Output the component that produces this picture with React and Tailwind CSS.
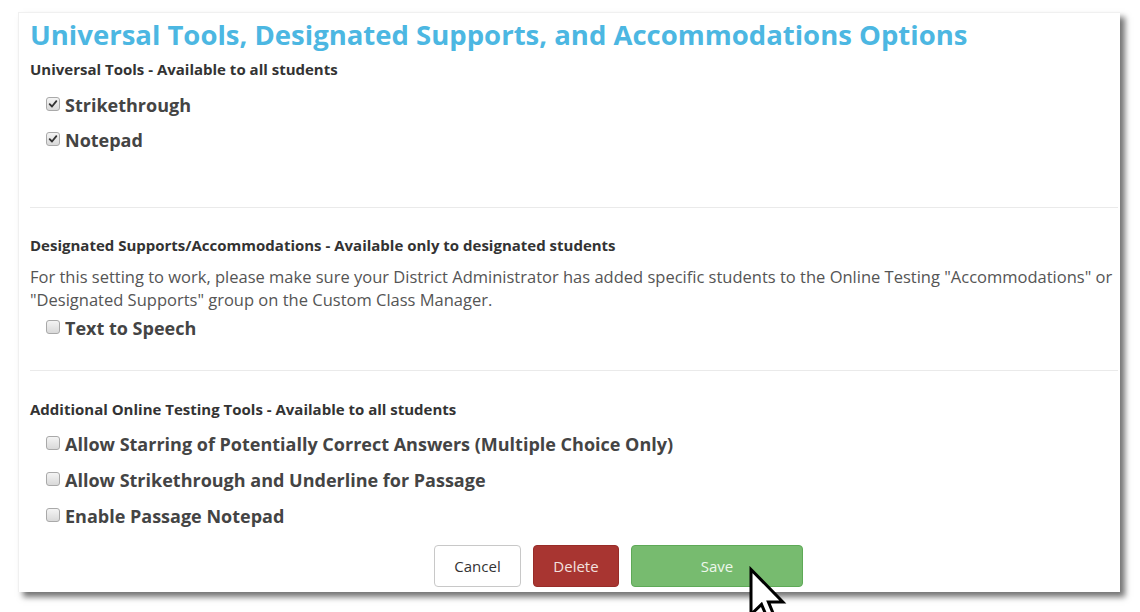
import React, { useState } from "react";

const font = { fontFamily: '"Open Sans", "Noto Sans", sans-serif' };

const Check = ({ checked, onChange }) => (
  <span
    onClick={onChange}
    className="mt-[9px] w-[14px] h-[14px] shrink-0 rounded-[3px] border border-[#a9a9a9] bg-gradient-to-b from-[#f4f4f4] to-[#d9d9d9] flex items-center justify-center cursor-pointer"
  >
    {checked && (
      <svg viewBox="0 0 12 12" className="w-[10px] h-[10px]">
        <path d="M2 6.2 L4.8 9 L10 2.6" fill="none" stroke="#333" strokeWidth="2.2" strokeLinecap="round" strokeLinejoin="round" />
      </svg>
    )}
  </span>
);

const Option = ({ label, checked, onChange, tall }) => (
  <div className={`flex items-start gap-[5px] pl-[16px] ${tall ? "h-[36px]" : "h-[35px]"}`}>
    <Check checked={checked} onChange={onChange} />
    <span className="text-[18px] leading-[35px] font-bold text-[#444]">{label}</span>
  </div>
);

const Heading = ({ children, className }) => (
  <h4 className={`text-[15px] leading-[20px] font-bold text-[#333] ${className}`}>{children}</h4>
);

const Cursor = () => (
  <svg className="absolute left-[748px] top-[566px] w-[42px] h-[64px]" viewBox="0 0 14 21">
    <path
      d="M1 1 L1 16 L4.5 12.6 L7 18.5 L9.2 17.6 L6.8 11.8 L11.6 11.8 Z"
      fill="#fff"
      stroke="#000"
      strokeWidth="1"
      strokeLinejoin="miter"
    />
  </svg>
);

export default function App() {
  const [opts, setOpts] = useState({
    strike: true,
    notepad: true,
    tts: false,
    star: false,
    passage: false,
    passNote: false,
  });
  const toggle = (k) => setOpts((o) => ({ ...o, [k]: !o[k] }));

  return (
    <div className="relative w-[1140px] h-[612px] bg-white overflow-hidden" style={font}>
      <div className="ml-[18px] mt-[12px] w-[1102px] bg-white border-l border-t border-[#f0f0f0] shadow-[5px_5px_6px_rgba(0,0,0,0.55)] pl-[11px] pr-[2px] pt-[4px] pb-[5px]">
        <h2 className="text-[27.5px] leading-[36px] font-bold text-[#4cb7e2]">
          Universal Tools, Designated Supports, and Accommodations Options
        </h2>

        <Heading className="mt-[6px]">Universal Tools - Available to all students</Heading>
        <div className="mt-[9px]">
          <Option label="Strikethrough" checked={opts.strike} onChange={() => toggle("strike")} />
          <Option label="Notepad" checked={opts.notepad} onChange={() => toggle("notepad")} />
        </div>

        <hr className="mt-[49px] border-0 border-t border-[#eaeaea]" />

        <Heading className="mt-[27px]">
          Designated Supports/Accommodations - Available only to designated students
        </Heading>
        <p className="mt-[10px] text-[16.5px] leading-[23px] text-[#555]">
          For this setting to work, please make sure your District Administrator has added specific students to the Online Testing "Accommodations" or "Designated Supports" group on the Custom Class Manager.
        </p>
        <Option label="Text to Speech" checked={opts.tts} onChange={() => toggle("tts")} />

        <hr className="mt-[24px] border-0 border-t border-[#eaeaea]" />

        <Heading className="mt-[28px]">Additional Online Testing Tools - Available to all students</Heading>
        <div className="mt-[8px]">
          <Option
            tall
            label="Allow Starring of Potentially Correct Answers (Multiple Choice Only)"
            checked={opts.star}
            onChange={() => toggle("star")}
          />
          <Option
            tall
            label="Allow Strikethrough and Underline for Passage"
            checked={opts.passage}
            onChange={() => toggle("passage")}
          />
          <Option tall label="Enable Passage Notepad" checked={opts.passNote} onChange={() => toggle("passNote")} />
        </div>

        <div className="mt-[10px] flex gap-[12px] pl-[404px]">
          <button className="w-[87px] h-[42px] rounded-[4px] border border-[#c8c8c8] bg-white text-[15px] text-[#333]">
            Cancel
          </button>
          <button className="w-[86px] h-[42px] rounded-[4px] border border-[#982c28] bg-[#a83531] text-[15px] text-[#f3e0df]">
            Delete
          </button>
          <button className="w-[172px] h-[42px] rounded-[4px] border border-[#5ea957] bg-[#77bb6f] text-[15px] text-[#eef7ec]">
            Save
          </button>
        </div>
      </div>
      <Cursor />
    </div>
  );
}
